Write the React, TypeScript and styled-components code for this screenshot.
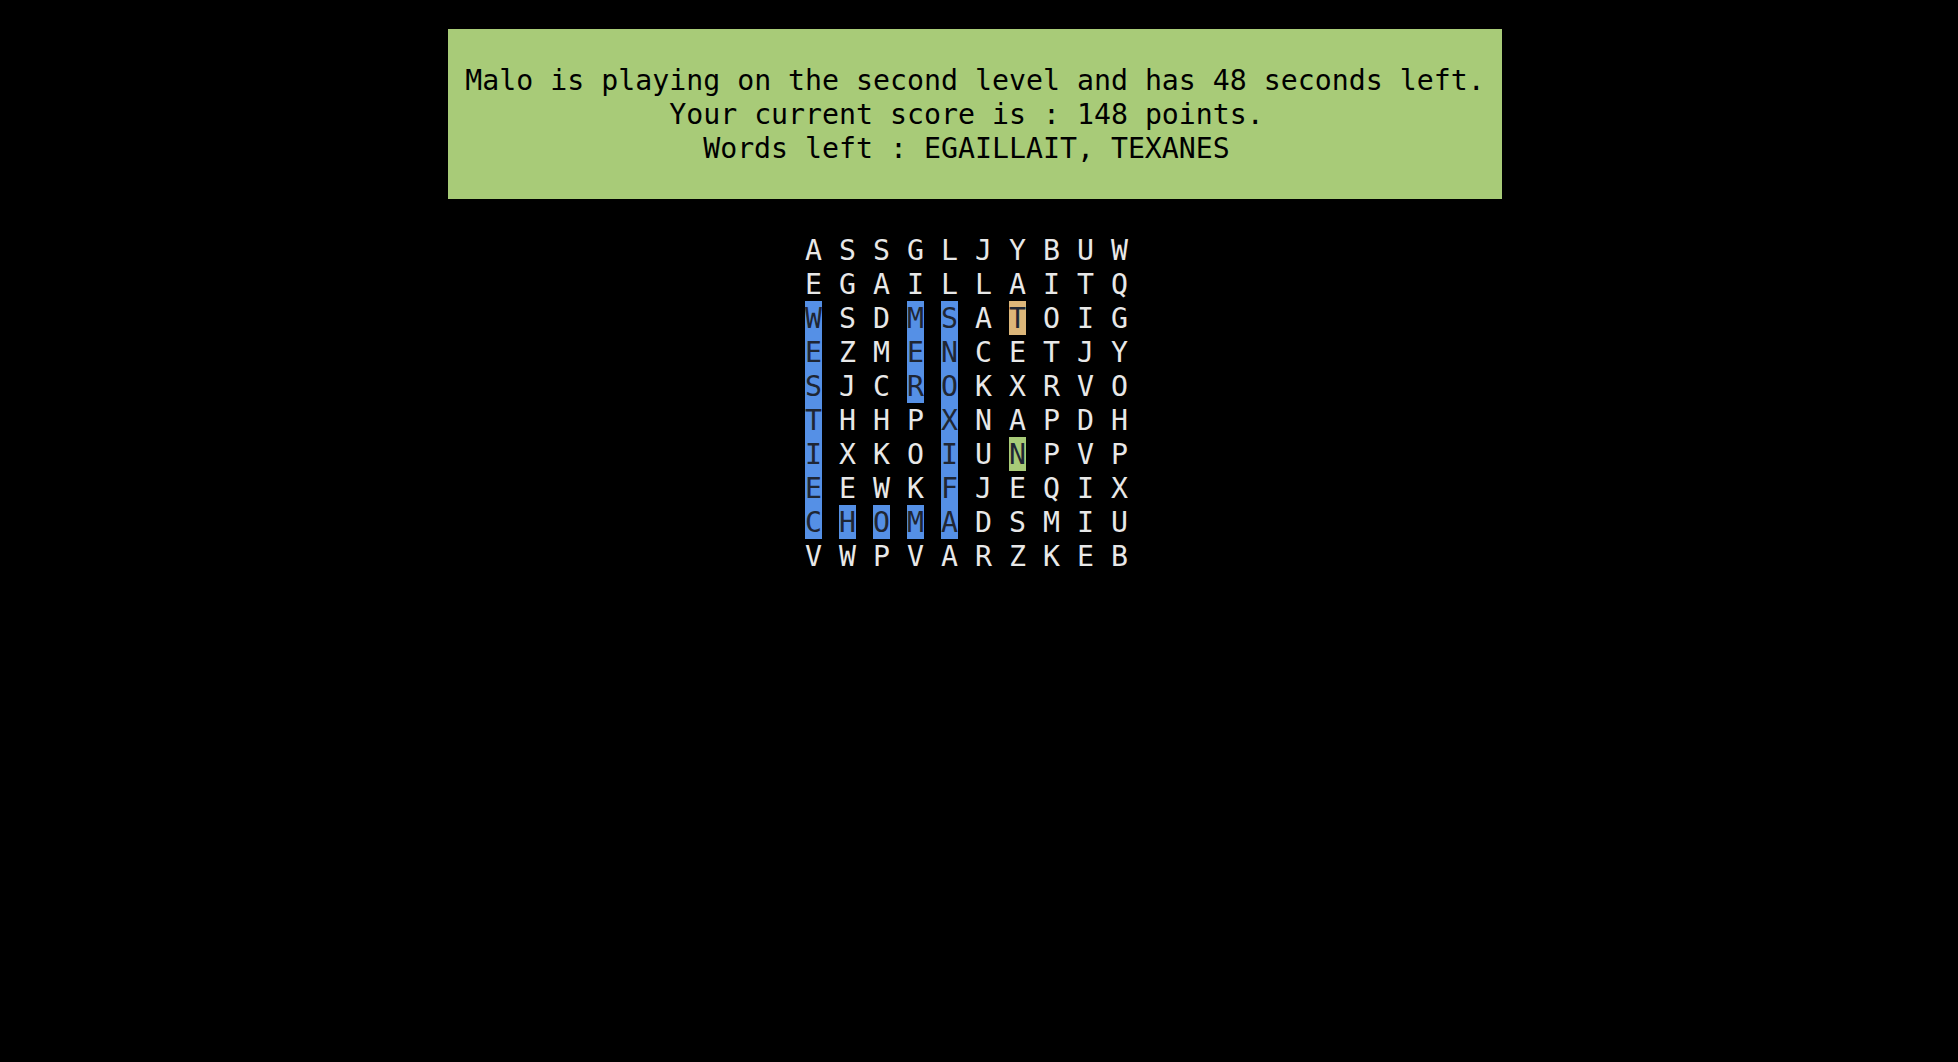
import React from "react";
import styled, { createGlobalStyle } from "styled-components";

const GlobalStyle = createGlobalStyle`
  html, body {
    margin: 0;
    padding: 0;
    background: #000;
  }
  body {
    font-family: "DejaVu Sans Mono", "Liberation Mono", monospace;
  }
`;

const Page = styled.div`
  width: 1950px;
  min-height: 1062px;
  display: flex;
  flex-direction: column;
  align-items: center;
  padding-top: 29px;
  box-sizing: border-box;
  font-family: "DejaVu Sans Mono", "Liberation Mono", monospace;
  font-size: 28.23px;
  line-height: 34px;
`;

const Banner = styled.div`
  background: #a8cb78;
  color: #000;
  padding: 34px 17px;
  text-align: center;
  white-space: pre;
`;

const BannerLine = styled.div`
  height: 34px;
  padding-top: 1px;
  box-sizing: border-box;
`;

const Board = styled.div`
  margin-top: 34px;
  display: flex;
  flex-direction: column;
`;

const Row = styled.div`
  display: flex;
  height: 34px;
`;

type Mark = "none" | "blue" | "tan" | "green";

const markBg: Record<Mark, string> = {
  none: "transparent",
  blue: "#5590e6",
  tan: "#dcb679",
  green: "#a8cb78",
};

const Cell = styled.span<{ $mark: Mark }>`
  width: 17px;
  height: 34px;
  margin-right: 17px;
  padding-top: 2px;
  box-sizing: border-box;
  display: flex;
  align-items: center;
  justify-content: center;
  background: ${(p) => markBg[p.$mark]};
  color: ${(p) => (p.$mark === "none" ? "#e8e8e8" : "#1f2633")};
`;

const grid = [
  "ASSGLJYBUW",
  "EGAILLAITQ",
  "WSDMSATOIG",
  "EZMENCETJY",
  "SJCROKXRVO",
  "THHPXNAPDH",
  "IXKOIUNPVP",
  "EEWKFJEQIX",
  "CHOMADSMIU",
  "VWPVARZKEB",
];

const markFor = (r: number, c: number): Mark => {
  if (r === 2 && c === 6) return "tan";
  if (r === 6 && c === 6) return "green";
  if (c === 0 && r >= 2 && r <= 8) return "blue";
  if (c === 3 && r >= 2 && r <= 4) return "blue";
  if (c === 4 && r >= 2 && r <= 8) return "blue";
  if (r === 8 && (c === 1 || c === 2 || c === 3)) return "blue";
  return "none";
};

export default function App() {
  return (
    <>
      <GlobalStyle />
      <Page>
        <Banner>
          <BannerLine>Malo is playing on the second level and has 48 seconds left.</BannerLine>
          <BannerLine>{"Your current score is : 148 points. "}</BannerLine>
          <BannerLine>{"Words left : EGAILLAIT, TEXANES "}</BannerLine>
        </Banner>
        <Board>
          {grid.map((row, r) => (
            <Row key={r}>
              {row.split("").map((ch, c) => (
                <Cell key={c} $mark={markFor(r, c)}>
                  {ch}
                </Cell>
              ))}
            </Row>
          ))}
        </Board>
      </Page>
    </>
  );
}
